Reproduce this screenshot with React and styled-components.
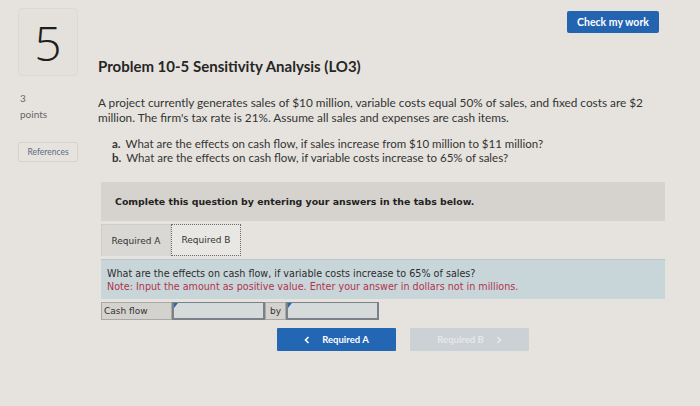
import React from 'react';
import styled, { createGlobalStyle } from 'styled-components';

const GlobalStyle = createGlobalStyle`
  html, body {
    margin: 0;
    padding: 0;
    background: #e6e3de;
  }
  body {
    font-family: Lato, "Open Sans", sans-serif;
    color: #2f2f2f;
  }
`;

const Page = styled.div`
  width: 700px;
  height: 406px;
  box-sizing: border-box;
  padding: 8px 35px 0 18px;
  display: flex;
  gap: 20px;
  position: relative;
  overflow: hidden;
`;

const Sidebar = styled.div`
  width: 60px;
  display: flex;
  flex-direction: column;
  flex-shrink: 0;
`;

const NumberBox = styled.div`
  height: 66px;
  border: 1px solid #dcd9d4;
  border-radius: 4px;
  background: #e4e1dc;
  display: flex;
  align-items: center;
  justify-content: center;
  font-family: "Open Sans", sans-serif;
  font-size: 48px;
  font-weight: 300;
  color: #1e1e1e;
`;

const Points = styled.div`
  margin-top: 14px;
  padding-left: 2px;
  font-size: 10px;
  line-height: 16px;
  color: #666;
`;

const RefButton = styled.div`
  margin-top: 20px;
  height: 18px;
  border: 1px solid #d6d3ce;
  border-radius: 2px;
  font-size: 8.5px;
  color: #5a6c84;
  display: flex;
  align-items: center;
  justify-content: center;
`;

const Main = styled.div`
  flex: 1;
  display: flex;
  flex-direction: column;
`;

const CheckButton = styled.div`
  position: absolute;
  top: 11px;
  left: 567px;
  width: 92px;
  height: 22px;
  background: #2264b0;
  border-radius: 2px;
  color: #fff;
  font-size: 10.5px;
  font-weight: 700;
  display: flex;
  align-items: center;
  justify-content: center;
`;

const Title = styled.h1`
  margin: 48px 0 0;
  font-size: 15px;
  font-weight: 700;
  line-height: 20px;
  color: #262626;
`;

const Para = styled.p`
  margin: 20px 0 0;
  font-size: 11.8px;
  line-height: 14.5px;
  color: #333;
`;

const List = styled.ol`
  margin: 12px 0 0;
  padding-left: 14px;
  list-style: none;
  font-size: 11.5px;
  line-height: 13.5px;
  color: #333;
`;

const Item = styled.li`
  display: flex;
  gap: 5px;
`;

const Letter = styled.span`
  font-weight: 700;
`;

const Instruction = styled.div`
  margin-top: 18px;
  margin-left: 3px;
  height: 39px;
  background: #d6d3ce;
  display: flex;
  align-items: center;
  padding-left: 14px;
  font-family: "DejaVu Sans", Verdana, sans-serif;
  font-size: 9.4px;
  font-weight: 700;
  color: #222;
`;

const Tabs = styled.div`
  margin-top: 3px;
  margin-left: 3px;
  display: flex;
  height: 32px;
`;

const Tab = styled.div`
  width: 70px;
  box-sizing: border-box;
  display: flex;
  align-items: center;
  justify-content: center;
  font-family: "DejaVu Sans", Verdana, sans-serif;
  font-size: 9px;
  color: #333;
  background: ${({ active }) => (active ? '#e9e7e3' : '#dad8d4')};
  border: ${({ active }) => (active ? '1px dotted #6b6b6b' : '1px solid #d0cdc8')};
  border-bottom: ${({ active }) => (active ? '1px dotted #6b6b6b' : 'none')};
`;

const QuestionBox = styled.div`
  margin-top: 3px;
  margin-left: 3px;
  height: 40px;
  box-sizing: border-box;
  background: #c8d6da;
  border-top: 1px solid #b7c6cb;
  padding: 7px 6px 0;
  font-family: "DejaVu Sans", Verdana, sans-serif;
  font-size: 9.6px;
  line-height: 13px;
  color: #2c2c2c;
`;

const Note = styled.div`
  color: #b2334a;
`;

const AnswerRow = styled.div`
  margin-top: 3px;
  margin-left: 3px;
  display: flex;
  height: 18px;
  font-family: "DejaVu Sans", Verdana, sans-serif;
  font-size: 9px;
  color: #333;
`;

const Cell = styled.div`
  width: ${({ w }) => w}px;
  box-sizing: border-box;
  background: #d4d2cf;
  border: 1px solid #aaa8a5;
  display: flex;
  align-items: center;
  padding-left: ${({ pad }) => pad}px;
`;

const Input = styled.div`
  width: ${({ w }) => w}px;
  box-sizing: border-box;
  background: #d7dadb;
  border: 2px solid #7a8188;
  border-top-width: 1px;
  position: relative;
  &::before {
    content: '';
    position: absolute;
    left: 0;
    top: 0;
    border-top: 5px solid #2c66b5;
    border-right: 4px solid transparent;
  }
`;

const NavRow = styled.div`
  margin-top: 8px;
  margin-left: 179px;
  display: flex;
  gap: 14px;
`;

const NavButton = styled.div`
  width: 119px;
  height: 23px;
  border-radius: 1px;
  display: flex;
  align-items: center;
  justify-content: center;
  gap: 12px;
  font-size: 9.5px;
  font-weight: 700;
  color: ${({ disabled }) => (disabled ? '#e7e8ea' : '#fff')};
  background: ${({ disabled }) => (disabled ? '#ccd1d5' : '#2266b4')};
`;

const Chevron = ({ dir }) => (
  <svg width="6" height="8" viewBox="0 0 6 8" fill="none" stroke="currentColor" strokeWidth="1.6">
    {dir === 'left' ? <path d="M4.5 1 L1.5 4 L4.5 7" /> : <path d="M1.5 1 L4.5 4 L1.5 7" />}
  </svg>
);

export default function App() {
  return (
    <>
      <GlobalStyle />
      <Page>
        <Sidebar>
          <NumberBox>5</NumberBox>
          <Points>
            3
            <br />
            points
          </Points>
          <RefButton>References</RefButton>
        </Sidebar>
        <Main>
          <Title>Problem 10-5 Sensitivity Analysis (LO3)</Title>
          <Para>
            A project currently generates sales of $10 million, variable costs equal 50% of sales, and fixed costs are $2
            million. The firm's tax rate is 21%. Assume all sales and expenses are cash items.
          </Para>
          <List>
            <Item>
              <Letter>a.</Letter>
              <span>What are the effects on cash flow, if sales increase from $10 million to $11 million?</span>
            </Item>
            <Item>
              <Letter>b.</Letter>
              <span>What are the effects on cash flow, if variable costs increase to 65% of sales?</span>
            </Item>
          </List>
          <Instruction>Complete this question by entering your answers in the tabs below.</Instruction>
          <Tabs>
            <Tab>Required A</Tab>
            <Tab active>Required B</Tab>
          </Tabs>
          <QuestionBox>
            <div>What are the effects on cash flow, if variable costs increase to 65% of sales?</div>
            <Note>Note: Input the amount as positive value. Enter your answer in dollars not in millions.</Note>
          </QuestionBox>
          <AnswerRow>
            <Cell w={71} pad={2}>Cash flow</Cell>
            <Input w={93} />
            <Cell w={21} pad={4}>by</Cell>
            <Input w={93} />
          </AnswerRow>
          <NavRow>
            <NavButton>
              <Chevron dir="left" />
              <span>Required A</span>
            </NavButton>
            <NavButton disabled>
              <span>Required B</span>
              <Chevron dir="right" />
            </NavButton>
          </NavRow>
        </Main>
        <CheckButton>Check my work</CheckButton>
      </Page>
    </>
  );
}
